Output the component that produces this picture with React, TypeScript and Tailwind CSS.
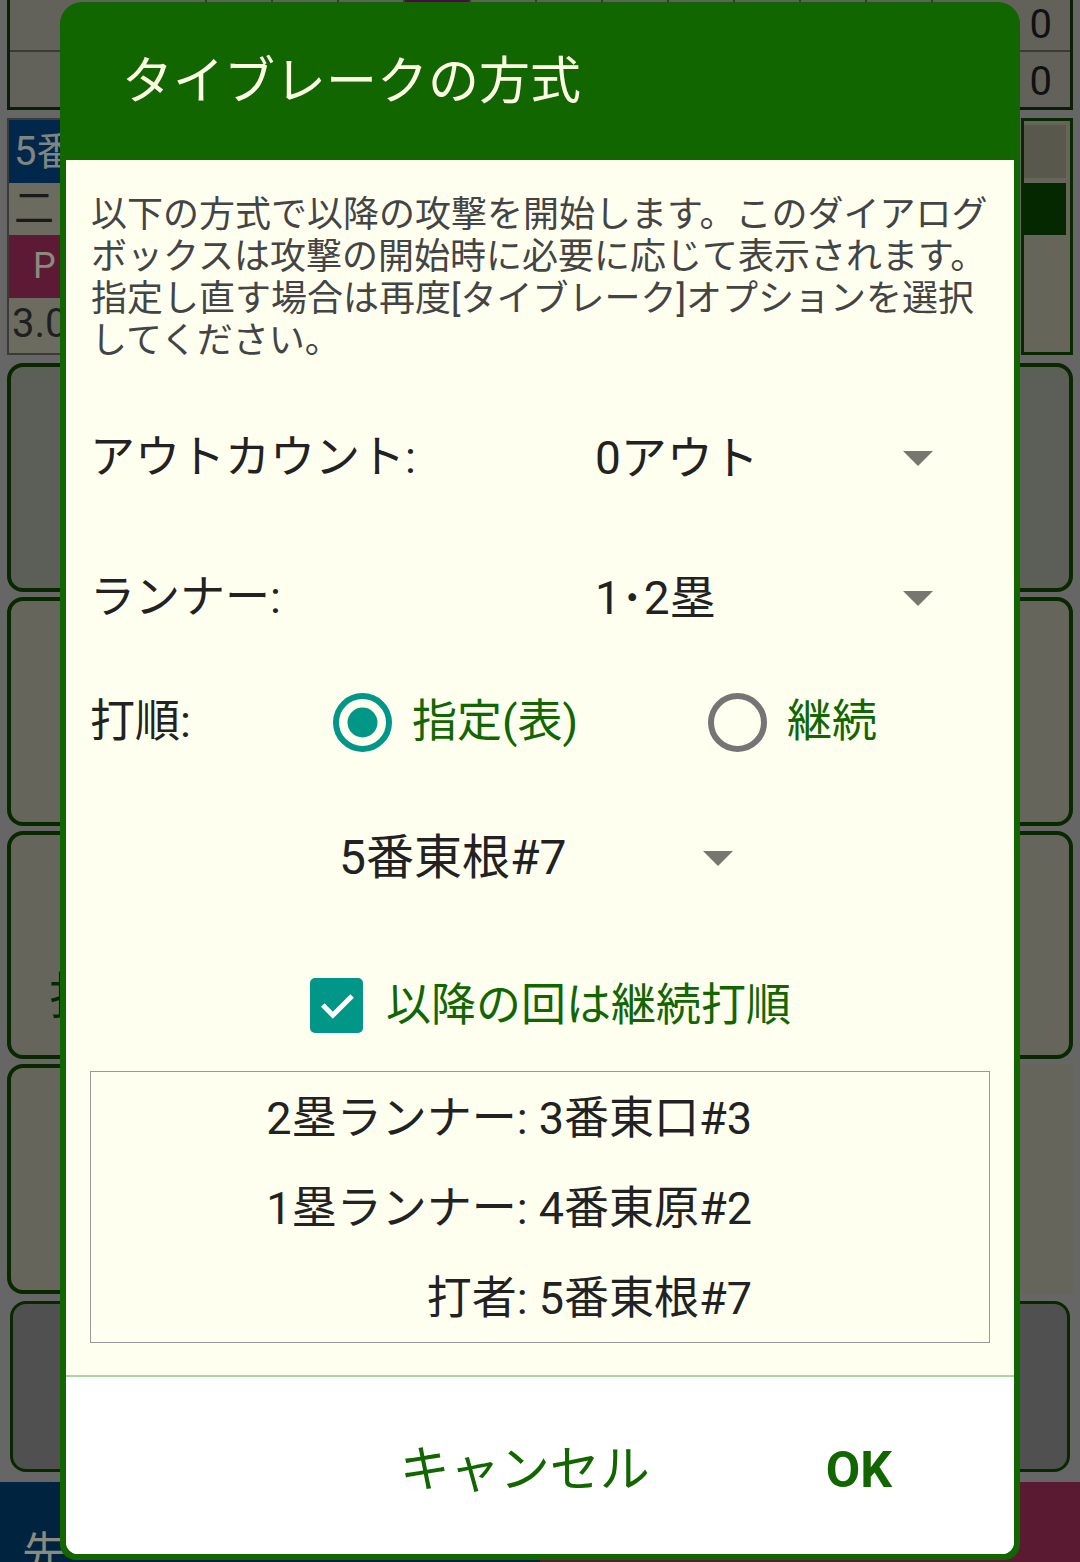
import React from "react";

const FONT = { fontFamily: "Roboto, 'Noto Sans CJK JP', 'Noto Sans', sans-serif" };

function Arrow() {
  return (
    <svg width="30" height="15" viewBox="0 0 30 15" className="shrink-0">
      <polygon points="0,0 30,0 15,15" fill="#777770" />
    </svg>
  );
}

function Radio({ checked }: { checked: boolean }) {
  const c = checked ? "#009688" : "#757575";
  return (
    <svg width="59" height="59" viewBox="0 0 59 59" className="shrink-0">
      <circle cx="29.5" cy="29.5" r="26.5" fill="none" stroke={c} strokeWidth="6" />
      {checked && <circle cx="29.5" cy="29.5" r="15" fill={c} />}
    </svg>
  );
}

function Checkbox() {
  return (
    <div className="w-[53px] h-[55px] rounded-[5px] bg-[#009688] flex items-center justify-center shrink-0">
      <svg width="40" height="40" viewBox="0 0 24 24">
        <path d="M4.5 12.5l5 5L20 7" fill="none" stroke="#ffffff" strokeWidth="3" strokeLinecap="square" />
      </svg>
    </div>
  );
}

function Background() {
  const cols = [207, 273, 340, 406, 474, 540, 607, 673, 739, 806, 873];
  return (
    <div className="w-[1080px] h-[1562px] bg-[#666666] px-[7px] flex flex-col">
      {/* top score table */}
      <div className="h-[110px] border-x-[3px] border-b-[3px] border-[#0a1f05] flex flex-col bg-[#62625a] relative">
        <div className="h-[52px] border-b-[2px] border-[#3a3a36] flex">
          <div className="w-[197px] border-r-[2px] border-[#3a3a36]" />
          {cols.map((x, i) => (
            <div key={x} className={"w-[66px] border-r-[2px] border-[#3a3a36] " + (i === 3 ? "bg-[#4a0a4a]" : "")} />
          ))}
          <div className="flex-1 flex items-center justify-end pr-[18px] text-[40px] text-[#111]">0</div>
        </div>
        <div className="flex-1 flex">
          <div className="w-[197px] border-r-[2px] border-[#3a3a36]" />
          {cols.map((x) => (
            <div key={x} className="w-[66px] border-r-[2px] border-[#3a3a36]" />
          ))}
          <div className="flex-1 flex items-center justify-end pr-[18px] text-[40px] text-[#111]">0</div>
        </div>
      </div>

      {/* middle info panel */}
      <div className="mt-[8px] h-[237px] flex justify-between">
        <div className="w-[200px] flex flex-col border-[2px] border-[#3a3a36]">
          <div className="h-[63px] bg-[#01284a] text-[#7f8580] text-[40px] leading-[63px] pl-[5px]">5番</div>
          <div className="h-[52px] bg-[#6b6b60] text-[#1a1a1a] text-[40px] leading-[52px] pl-[5px]">二</div>
          <div className="h-[63px] bg-[#5c1a35] text-[#8a8a80] text-[36px] leading-[63px] pl-[24px]">P</div>
          <div className="flex-1 bg-[#6b6b60] text-[#1f1f1f] text-[40px] leading-[52px] pl-[3px]">3.0</div>
        </div>
        <div className="w-[52px] border-[3px] border-[#0a2800] bg-[#65655a] flex flex-col pt-[4px] pr-[4px]">
          <div className="h-[53px] bg-[#58584c]" />
          <div className="h-[5px]" />
          <div className="h-[52px] bg-[#062800]" />
        </div>
      </div>

      {/* big buttons */}
      <div className="mt-[8px] flex flex-col gap-[5px]">
        {[229, 229, 228, 230].map((h, i) => (
          <div key={i} className="flex justify-between" style={{ height: h }}>
            <div className={"w-[300px] rounded-[16px] border-[4px] border-[#0a2800] flex items-end pb-[20px] pl-[38px] " + (i === 0 ? "bg-[#5c5f58]" : "bg-[#65655c]")}>
              {i === 2 && <span className="text-[50px] text-[#062800]">打</span>}
            </div>
            {i < 3 ? (
              <div className={"w-[300px] rounded-[16px] border-[4px] border-[#0a2800] " + (i === 0 ? "bg-[#5c5f58]" : "bg-[#65655c]")} />
            ) : (
              <div className="w-[300px] bg-[#65655c]" />
            )}
          </div>
        ))}
        <div className="h-[171px] flex justify-between mt-[2px]">
          <div className="w-[300px] rounded-[16px] border-[3px] border-[#0a2800] bg-[#505050] ml-[3px]" />
          <div className="w-[300px] rounded-[16px] border-[3px] border-[#0a2800] bg-[#505050] mr-[3px]" />
        </div>
      </div>

      {/* bottom bar */}
      <div className="mt-[10px] -mx-[7px] flex-1 flex overflow-hidden">
        <div className="w-[540px] bg-[#002440] text-[#8a8a80] text-[44px] leading-none pt-[50px] pl-[22px]">先</div>
        <div className="w-[540px] bg-[#5a1a32]" />
      </div>
    </div>
  );
}

export default function App() {
  return (
    <div className="relative w-[1080px] h-[1562px] overflow-hidden" style={FONT}>
      <Background />

      {/* dialog */}
      <div className="absolute left-[60px] top-[2px] w-[960px] h-[1558px] rounded-t-[22px] rounded-b-[16px] bg-[#116600] px-[6px] pb-[6px] flex flex-col">
        <div className="h-[158px] flex items-center pl-[56px]">
          <span className="text-[51px] text-[#ffffe6] leading-none">タイブレークの方式</span>
        </div>
        <div className="flex-1 flex flex-col bg-[#fffff0] rounded-b-[12px] overflow-hidden">
          <div className="pt-[34px] pl-[25px] text-[36px] leading-[42px] text-[#444444] whitespace-nowrap">
            <div>以下の方式で以降の攻撃を開始します。このダイアログ</div>
            <div>ボックスは攻撃の開始時に必要に応じて表示されます。</div>
            <div>指定し直す場合は再度[タイブレーク]オプションを選択</div>
            <div>してください。</div>
          </div>

          <div className="mt-[26px] h-[140px] flex items-center pl-[24px] text-[45px] text-[#222222]">
            <div className="w-[505px]">アウトカウント:</div>
            <div className="w-[308px] text-[46px]">0アウト</div>
            <Arrow />
          </div>
          <div className="h-[140px] flex items-center pl-[24px] text-[45px] text-[#222222]">
            <div className="w-[505px]">ランナー:</div>
            <div className="w-[308px] text-[46px]">1･2塁</div>
            <Arrow />
          </div>
          <div className="h-[108px] flex items-center pl-[24px] text-[45px]">
            <div className="w-[243px] text-[#222222]">打順:</div>
            <div className="w-[375px] flex items-center gap-[20px]">
              <Radio checked />
              <span className="text-[#116600]">指定(表)</span>
            </div>
            <div className="flex items-center gap-[20px]">
              <Radio checked={false} />
              <span className="text-[#116600]">継続</span>
            </div>
          </div>
          <div className="h-[164px] flex items-center pl-[273px] text-[48px] text-[#222222]">
            <div className="w-[364px]">5番東根#7</div>
            <Arrow />
          </div>
          <div className="h-[131px] flex items-center pl-[244px] gap-[23px] text-[45px] text-[#116600]">
            <Checkbox />
            <span>以降の回は継続打順</span>
          </div>

          <div className="mx-[24px] h-[272px] border border-[#999999] flex flex-col items-end pr-[237px] pt-[2px] text-[45px] leading-[90px] text-[#222222] whitespace-nowrap">
            <div>2塁ランナー: 3番東口#3</div>
            <div>1塁ランナー: 4番東原#2</div>
            <div>打者: 5番東根#7</div>
          </div>

          <div className="mt-[32px] h-[2px] bg-[#a8d4a8]" />
          <div className="flex-1 bg-white flex items-center justify-end pr-[122px] gap-[176px] pt-[9px] text-[50px] text-[#116600]">
            <span>キャンセル</span>
            <span className="font-bold">OK</span>
          </div>
        </div>
      </div>
    </div>
  );
}
